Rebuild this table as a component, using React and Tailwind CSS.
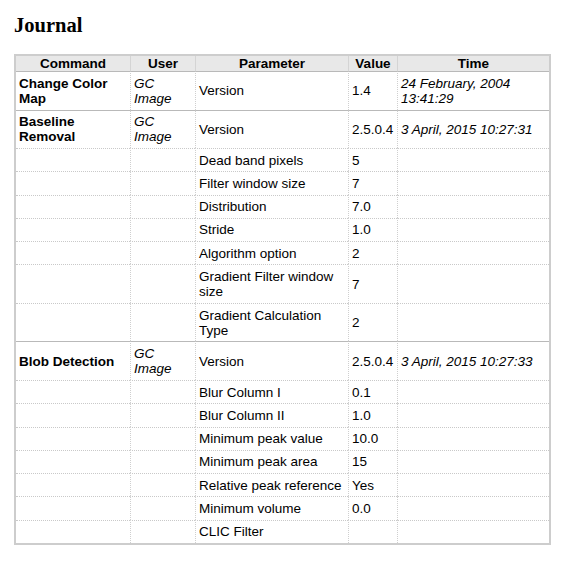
import React from "react";

const groups = [
  {
    cmd: "Change Color Map",
    user: "GC Image",
    rows: [["Version", "1.4", "24 February, 2004 13:41:29"]],
  },
  {
    cmd: "Baseline Removal",
    user: "GC Image",
    rows: [
      ["Version", "2.5.0.4", "3 April, 2015 10:27:31"],
      ["Dead band pixels", "5"],
      ["Filter window size", "7"],
      ["Distribution", "7.0"],
      ["Stride", "1.0"],
      ["Algorithm option", "2"],
      ["Gradient Filter window size", "7"],
      ["Gradient Calculation Type", "2"],
    ],
  },
  {
    cmd: "Blob Detection",
    user: "GC Image",
    rows: [
      ["Version", "2.5.0.4", "3 April, 2015 10:27:33"],
      ["Blur Column I", "0.1"],
      ["Blur Column II", "1.0"],
      ["Minimum peak value", "10.0"],
      ["Minimum peak area", "15"],
      ["Relative peak reference", "Yes"],
      ["Minimum volume", "0.0"],
      ["CLIC Filter", ""],
    ],
  },
];

const cellBase =
  "px-[3px] py-[3.55px] leading-[15.2px] align-middle border-t border-[#c9c9c9]";

export default function App() {
  return (
    <div
      className="w-[573px] h-[561px] bg-white text-black pl-[14px] pt-[15px]"
      style={{ fontFamily: '"Liberation Sans", Arial, sans-serif' }}
    >
      <h1
        className="text-[20.5px] font-bold leading-none m-0"
        style={{ fontFamily: '"Liberation Serif", "Times New Roman", serif' }}
      >
        Journal
      </h1>
      <table className="mt-[18.5px] w-[537px] table-fixed border-separate border-spacing-0 border-2 border-[#cdcdcd] text-[13.5px]">
        <colgroup>
          <col className="w-[114px]" />
          <col className="w-[65px]" />
          <col className="w-[153px]" />
          <col className="w-[49px]" />
          <col className="w-[152px]" />
        </colgroup>
        <thead>
          <tr className="bg-[#e8e8e8]">
            <th className="px-[3px] py-0 leading-[15px] font-bold text-center">Command</th>
            <th className="px-[3px] py-0 leading-[15px] font-bold text-center border-l border-[#d4d4d4]">User</th>
            <th className="px-[3px] py-0 leading-[15px] font-bold text-center border-l border-[#d4d4d4]">Parameter</th>
            <th className="px-[3px] py-0 leading-[15px] font-bold text-center border-l border-[#d4d4d4]">Value</th>
            <th className="px-[3px] py-0 leading-[15px] font-bold text-center border-l border-[#d4d4d4]">Time</th>
          </tr>
        </thead>
        <tbody>
          {groups.map((g, gi) =>
            g.rows.map((r, ri) => {
              const first = ri === 0;
              const top = first
                ? "[border-top-style:solid] border-t-[#b9b9b9]"
                : "[border-top-style:dotted]";
              const left =
                "border-l border-l-[#cfcfcf] [border-left-style:dotted]";
              return (
                <tr key={gi + "-" + ri}>
                  <td className={`${cellBase} ${top} font-bold`}>
                    {first ? g.cmd : ""}
                  </td>
                  <td className={`${cellBase} ${top} ${left} italic`}>
                    {first ? g.user : ""}
                  </td>
                  <td className={`${cellBase} ${top} ${left}`}>{r[0]}</td>
                  <td className={`${cellBase} ${top} ${left} whitespace-nowrap`}>
                    {r[1]}
                  </td>
                  <td className={`${cellBase} ${top} ${left} italic`}>
                    {r[2] || ""}
                  </td>
                </tr>
              );
            })
          )}
        </tbody>
      </table>
    </div>
  );
}
